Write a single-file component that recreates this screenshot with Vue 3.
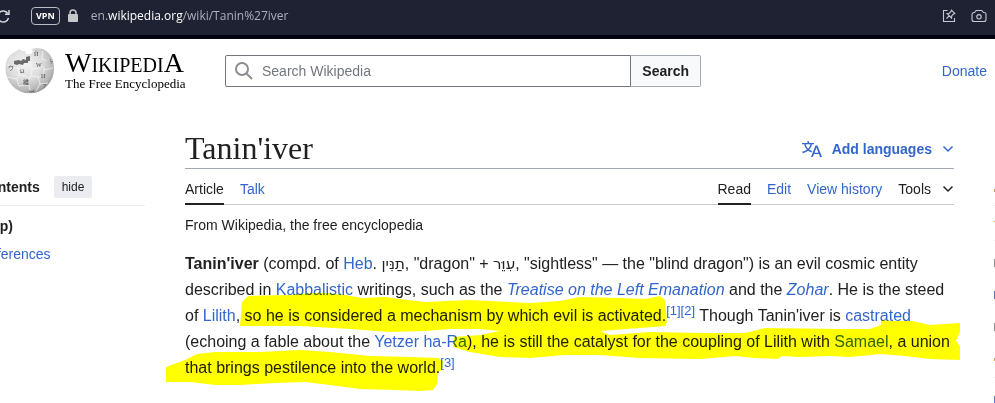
<script setup>
const pageTabs = [
  { label: 'Article', active: true },
  { label: 'Talk', active: false }
]
const viewTabs = [
  { label: 'Read', active: true },
  { label: 'Edit', active: false },
  { label: 'View history', active: false }
]
const glyphs = [
  { t: 'Ω', x: 18, y: 30 },
  { t: 'W', x: 34, y: 24 },
  { t: 'И', x: 39, y: 35 },
  { t: '維', x: 21, y: 41 },
  { t: 'ウ', x: 6, y: 27 },
  { t: 'ל', x: 48, y: 21 },
  { t: '7', x: 41, y: 45 },
  { t: 'Й', x: 32, y: 13 },
  { t: 'ب', x: 27, y: 49 }
]
</script>

<template>
  <div class="page">
    <div class="browser">
      <button class="icon-btn reload" aria-label="Reload">
        <svg width="14" height="14" viewBox="0 0 14 14" fill="none" stroke="#d5d8de" stroke-width="1.5">
          <path d="M12.500 9A5.500 5.500 0 1 1 11.800 4.500" />
          <path d="M13 1V5.200H9" />
        </svg>
      </button>
      <span class="vpn">VPN</span>
      <svg class="lock" width="12" height="14" viewBox="0 0 12 14">
        <path d="M3 6V4a3 3 0 0 1 6 0V6" fill="none" stroke="#c5c7ca" stroke-width="1.500" />
        <rect x="1" y="5" width="10" height="8" rx="1" fill="#c5c7ca" />
      </svg>
      <span class="url">en.<b>wikipedia.org</b>/wiki/Tanin%27iver</span>
      <button class="icon-btn" aria-label="Pin page">
        <svg width="14" height="14" viewBox="0 0 14 14" fill="none" stroke="#c6c9cf" stroke-width="1.100">
          <path d="M5.500 1.500H1.500V12.500H12.500V9" />
          <path d="M9.500 1.200 12.800 4.500 11.500 5 9.800 6.700 9.500 9 5 4.500 7.300 4.200 9 2.500ZM7.200 6.800 4.500 9.500" />
        </svg>
      </button>
      <button class="icon-btn" aria-label="Snapshot">
        <svg width="16" height="14" viewBox="0 0 16 14" fill="none" stroke="#c6c9cf" stroke-width="1.100">
          <path d="M3.500 3.500 5.200 1.500H10.800L12.500 3.500H13A2 2 0 0 1 15 5.500V10.500A2 2 0 0 1 13 12.500H3A2 2 0 0 1 1 10.500V5.500A2 2 0 0 1 3 3.500Z" />
          <circle cx="8" cy="7.800" r="2.200" />
        </svg>
      </button>
    </div>

    <header class="site-header">
      <a class="logo" href="#">
        <svg class="globe" width="50" height="46" viewBox="3 5 50 46">
          <defs>
            <radialGradient id="ball" cx="0.4" cy="0.35" r="0.68">
              <stop offset="0" stop-color="#f2f2f2" />
              <stop offset="0.5" stop-color="#dedede" />
              <stop offset="0.85" stop-color="#b8b8b8" />
              <stop offset="1" stop-color="#949494" />
            </radialGradient>
          </defs>
          <path d="M11 10 16 7 18 6 20 8 23 8 24 11 29 11 31 8 29 6 35 5 41 6C49 10 52 17 52 26A24.200 24.200 0 0 1 3.500 26C3.500 18 6 13 11 10Z" fill="url(#ball)" />
          <path d="M12 18 17 17 19 18 21 16 24 17 24 14 28 13 28 18 26 18 26 20 22 20 21 22 17 21 15 22 12 21Z" fill="#6a6a6a" />
          <path d="M5 22 11 23C12 26 15 26 16 24L17 32 15 36 5 34M17 32 24 33C24 36 29 36 29 33L36 34 38 41 34 48M29 33 30 26 28 18M30 26 38 25C40 22 43 24 42 27L41 33 36 34M42 27 51 25M41 8 40 16 45 18M15 36 17 43 27 42 28 49M38 41 46 40" fill="none" stroke="#f8f8f8" stroke-width="0.700" />
          <text v-for="g in glyphs" :key="g.t" :x="g.x" :y="g.y" class="glyph">{{ g.t }}</text>
        </svg>
        <span class="brand">
          <span class="wordmark"><span class="cap">W</span>IKIPEDI<span class="cap">A</span></span>
          <span class="tagline">The Free Encyclopedia</span>
        </span>
      </a>
      <form class="search" @submit.prevent>
        <label class="field">
          <svg width="18" height="18" viewBox="0 0 18 18" fill="none" stroke="#8a8d91" stroke-width="2">
            <circle cx="7" cy="7" r="6" />
            <path d="M11.500 11.500 17 17" />
          </svg>
          <input type="search" placeholder="Search Wikipedia" aria-label="Search Wikipedia">
        </label>
        <button class="search-btn">Search</button>
      </form>
      <a class="donate" href="#">Donate</a>
    </header>

    <div class="columns">
      <nav class="contents" aria-label="Contents">
        <div class="contents-head">
          <b>Contents</b>
          <button class="hide">hide</button>
        </div>
        <a class="top" href="#">(Top)</a>
        <a href="#">References</a>
      </nav>

      <main>
        <div class="title-row">
          <h1>Tanin'iver</h1>
          <button class="languages">
            <svg width="20" height="20" viewBox="0 0 20 20" fill="#36c">
              <path d="M20 18h-1.440a.6.6 0 0 1-.4-.12.800.800 0 0 1-.23-.31L17 15h-5l-1 2.540a.8.8 0 0 1-.22.3.6.6 0 0 1-.4.140H9l4.550-11.470h1.890zm-3.530-4.310L14.890 9.500a12 12 0 0 1-.39-1.240q-.09.37-.19.690l-.19.560-1.580 4.190zm-6.300-1.580a13.400 13.400 0 0 1-2.910-1.410 11.500 11.500 0 0 0 2.810-5.370H12V4H7.310a4 4 0 0 0-.2-.560C6.870 2.790 6.600 2 6.600 2l-1.470.500s.4.890.6 1.500H0v1.330h2.150A11.200 11.200 0 0 0 5 10.700a17.200 17.200 0 0 1-5 2.100q.560.820.870 1.380a23.300 23.300 0 0 0 5.220-2.510 15.600 15.600 0 0 0 3.560 1.770zM3.630 5.330h4.910a8.100 8.100 0 0 1-2.450 4.450 9.100 9.100 0 0 1-2.460-4.450" />
            </svg>
            <span>Add languages</span>
            <svg class="chevron" width="12" height="12" viewBox="0 0 12 12"><path d="M1.500 3.500 6 8 10.500 3.500" /></svg>
          </button>
        </div>
        <div class="tabs">
          <a v-for="t in pageTabs" :key="t.label" href="#" :class="{ active: t.active }">{{ t.label }}</a>
          <span class="spacer"></span>
          <a v-for="t in viewTabs" :key="t.label" href="#" :class="{ active: t.active }">{{ t.label }}</a>
          <button class="tools">
            <span>Tools</span>
            <svg class="chevron" width="12" height="12" viewBox="0 0 12 12"><path d="M1.500 3.500 6 8 10.500 3.500" /></svg>
          </button>
        </div>
        <p class="from">From Wikipedia, the free encyclopedia</p>
        <div class="article">
          <p>
            <b>Tanin'iver</b> (compd. of <a href="#">Heb</a>. <bdi lang="he">תַנִּין</bdi>, "dragon" + <bdi lang="he">עִוֵּר</bdi>, "sightless" — the "blind dragon") is an evil cosmic entity described in <a href="#">Kabbalistic</a> writings, such as the <a href="#"><i>Treatise on the Left Emanation</i></a> and the <a href="#"><i>Zohar</i></a>. He is the steed of <a href="#">Lilith</a>, so he is considered a mechanism by which evil is activated.<sup><a href="#">[1]</a><a href="#">[2]</a></sup> Though Tanin'iver is <a href="#">castrated</a> (echoing a fable about the <a href="#">Yetzer ha-Ra</a>), he is still the catalyst for the coupling of Lilith with <a href="#">Samael</a>, a union that brings pestilence into the world.<sup><a href="#">[3]</a></sup>
          </p>
          <svg class="marker" width="800" height="110" viewBox="165 290 800 110" fill="#ff0" aria-hidden="true">
            <path d="M240 326 242 302 248 296 290 295 312 293 325 293 345 295 362 298 385 297 400 299 425 302 470 300 530 303 560 301 580 297 620 298 645 299 660 296 665 300 667 322 665 326 640 328 600 331 610 335 650 332 700 333 745 333 765 328 840 329 870 329 881 325 881 320 890 321 912 321 930 325 960 323 960 332 956 341 960 346 960 360 930 359 905 356 880 354 850 357 830 356 800 357 782 356 778 359 755 358 735 356 700 359 640 358 600 355 565 355 530 358 500 357 470 352 453 347 454 337 480 335 500 331 480 329 450 329 425 331 390 332 350 329 300 326Z" />
            <path d="M166 367 185 360 197 354 215 352 260 352 300 350 330 352 370 356 410 357 438 358 443 361 442 370 438 372 437 384 433 390 420 391 395 390 360 389 330 385 305 382 275 383 240 385 215 385 190 382 166 382Z" />
          </svg>
        </div>
      </main>
      <aside class="edge" aria-hidden="true">
        <svg width="1" height="275" viewBox="0 128 1 275">
          <path d="M0 189H1V192H0ZM0 221H1V222H0ZM0 358H1V361H0Z" fill="#d09a5c" />
          <path d="M0 205H1V206H0ZM0 240H1V241H0ZM0 377H1V378H0Z" fill="#e4e4e4" />
          <path d="M0 259H1V267H0ZM0 323H1V331H0Z" fill="#8c8c8c" />
          <path d="M0 291H1V299H0ZM0 396H1V403H0Z" fill="#5577c8" />
        </svg>
      </aside>
    </div>
  </div>
</template>

<style>
body { background: #fff; }
</style>

<style scoped>
.page {
  overflow: hidden;
  font-family: "Liberation Sans", Arial, sans-serif;
  font-size: 14px;
  line-height: 20px;
  color: #202122;
}
a { color: #36c; text-decoration: none; }
button { font: inherit; color: inherit; background: none; border: 0; padding: 0; }
svg { flex: none; }
h1, p { margin: 0; font-weight: normal; }

.browser {
  display: flex;
  align-items: center;
  height: 31px;
  padding: 0 8px 4px 0;
  background: #1e2233;
  border-bottom: 4px solid #020312;
}
.icon-btn { display: flex; margin-left: 15px; }
.reload { margin-left: -4px; }
.vpn {
  margin-left: 21px;
  padding: 0 4px;
  border: 1px solid #b9bcc4;
  border-radius: 4px;
  color: #fff;
  font: bold 9px/16px "Open Sans", sans-serif;
}
.lock { margin: 0 12px 0 7px; }
.url { flex: 1; font-family: "Open Sans", sans-serif; font-size: 12px; color: #a9b0be; }
.url b { font-weight: normal; color: #fff; }

.site-header { display: flex; align-items: center; padding: 9px 8px 0 5px; }
.logo { display: flex; align-items: center; color: #000; width: 220px; gap: 10px; flex: none; }
.glyph { font: 6px "Liberation Serif", "Noto Sans CJK JP", serif; fill: #444; }
.brand { display: flex; flex-direction: column; font-family: "Liberation Serif", serif; white-space: nowrap; }
.wordmark { font-size: 20px; line-height: 22px; }
.cap { font-size: 28px; }
.tagline { font-size: 13px; line-height: 15px; }
.search { display: flex; width: 476px; }
.field {
  display: flex;
  align-items: center;
  flex: 1;
  gap: 9px;
  padding-left: 9px;
  border: 1px solid #72777d;
  border-radius: 2px 0 0 2px;
}
.field input { flex: 1; min-width: 0; border: 0; padding: 0; outline: 0; height: 30px; font: inherit; background: none; }
.field input::placeholder { color: #72777d; }
.search-btn {
  padding: 0 11px;
  border: 1px solid #a2a9b1;
  border-left: 0;
  border-radius: 0 2px 2px 0;
  background: #f8f9fa;
  font-weight: bold;
}
.donate { margin-left: auto; }

.columns { display: flex; padding-top: 34px; }
.contents { flex: none; width: 166px; margin: 48px 40px 0 -21px; display: flex; flex-direction: column; }
.contents-head {
  display: flex;
  align-items: center;
  gap: 14px;
  padding-bottom: 7px;
  margin-bottom: 10px;
  border-bottom: 1px solid #eaecf0;
}
.hide { padding: 1px 8px; border-radius: 2px; background: #eaecf0; font-size: 12px; }
.contents a { margin-bottom: 8px; }
.contents .top { color: #202122; font-weight: bold; }

main { flex: 1; min-width: 0; }
.edge { display: flex; justify-content: flex-end; width: 41px; flex: none; }
.title-row { display: flex; justify-content: space-between; align-items: center; border-bottom: 1px solid #a2a9b1; }
h1 { font: 32px/40px "Liberation Serif", Georgia, serif; }
.languages { display: flex; align-items: center; gap: 10px; padding-top: 2px; color: #36c; font-weight: bold; }
.chevron { fill: none; stroke: currentColor; stroke-width: 1.5; }
.tabs { display: flex; gap: 16px; border-bottom: 1px solid #c8ccd1; }
.tabs > a { padding: 10px 0 4px; border-bottom: 2px solid transparent; margin-bottom: -1px; }
.tabs > .active { color: #202122; border-color: #202122; }
.spacer { flex: 1; }
.tools { display: flex; align-items: center; gap: 11px; padding-top: 4px; }
.from { padding-top: 10px; }
.article { position: relative; padding: 16px 0 24px; font-size: 16px; line-height: 26px; }
sup { font-size: 13px; line-height: 1; }
bdi { font-family: "DejaVu Sans", sans-serif; font-size: 15px; line-height: 1; }
.marker { position: absolute; left: -20px; top: 55px; mix-blend-mode: multiply; pointer-events: none; }
</style>
